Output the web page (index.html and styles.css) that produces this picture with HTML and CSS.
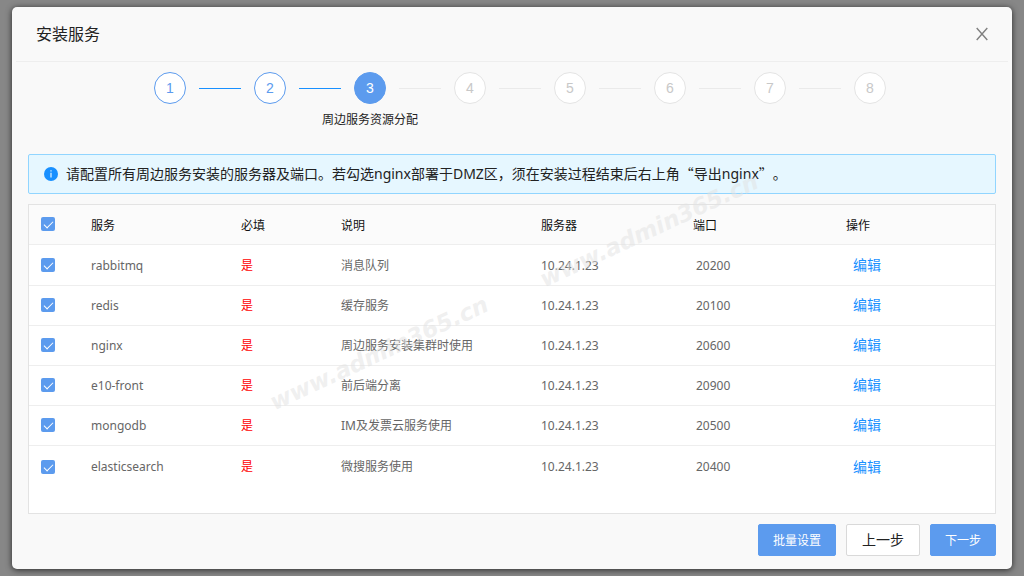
FILE: index.html
```html
<!DOCTYPE html>
<html lang="zh-CN">
<head>
<meta charset="utf-8">
<meta name="viewport" content="width=device-width, initial-scale=1">
<title>安装服务</title>
<link rel="stylesheet" href="styles.css">
</head>
<body>
<main class="modal" role="dialog" aria-labelledby="modal-title">
  <header class="modal-header">
    <h1 class="modal-title" id="modal-title">安装服务</h1>
    <button class="modal-close" type="button" aria-label="关闭">
      <svg width="12" height="14" viewBox="0 0 12 14" fill="none" stroke="#808080" stroke-width="1.4"><path d="M.7 1 11.3 13M11.3 1 .7 13"/></svg>
    </button>
  </header>

  <ol class="steps">
    <li class="step done"><span class="step-dot">1</span></li>
    <li class="step done"><span class="step-dot">2</span></li>
    <li class="step current" aria-current="step"><span class="step-dot">3</span><span class="step-label">周边服务资源分配</span></li>
    <li class="step"><span class="step-dot">4</span></li>
    <li class="step"><span class="step-dot">5</span></li>
    <li class="step"><span class="step-dot">6</span></li>
    <li class="step"><span class="step-dot">7</span></li>
    <li class="step"><span class="step-dot">8</span></li>
  </ol>

  <div class="alert" role="note">
    <svg class="alert-icon" width="14" height="14" viewBox="0 0 14 14"><circle cx="7" cy="7" r="7" fill="#1890ff"/><path d="M6.4 3.3h1.2v1.3H6.4zM6.4 5.8h1.2v4.6H6.4z" fill="#e6f7ff"/></svg>
    <p class="alert-text">请配置所有周边服务安装的服务器及端口。若勾选nginx部署于DMZ区<span class="cjk">，</span>须在安装过程结束后右上角<span class="cjk">“</span>导出nginx<span class="cjk">”</span>。</p>
  </div>

  <section class="panel">
    <table class="services">
      <colgroup>
        <col class="col-check"><col class="col-name"><col class="col-required"><col class="col-desc"><col class="col-server"><col class="col-port"><col>
      </colgroup>
      <thead>
        <tr>
          <th class="cell-check"><input class="check" type="checkbox" aria-label="全选" checked></th>
          <th>服务</th><th>必填</th><th>说明</th><th>服务器</th><th>端口</th><th>操作</th>
        </tr>
      </thead>
      <tbody>
        <tr>
          <td class="cell-check"><input class="check" type="checkbox" aria-label="rabbitmq" checked></td>
          <td>rabbitmq</td><td class="required">是</td><td>消息队列</td><td>10.24.1.23</td><td class="port">20200</td><td class="action"><a class="edit" href="#">编辑</a></td>
        </tr>
        <tr>
          <td class="cell-check"><input class="check" type="checkbox" aria-label="redis" checked></td>
          <td>redis</td><td class="required">是</td><td>缓存服务</td><td>10.24.1.23</td><td class="port">20100</td><td class="action"><a class="edit" href="#">编辑</a></td>
        </tr>
        <tr>
          <td class="cell-check"><input class="check" type="checkbox" aria-label="nginx" checked></td>
          <td>nginx</td><td class="required">是</td><td>周边服务安装集群时使用</td><td>10.24.1.23</td><td class="port">20600</td><td class="action"><a class="edit" href="#">编辑</a></td>
        </tr>
        <tr>
          <td class="cell-check"><input class="check" type="checkbox" aria-label="e10-front" checked></td>
          <td>e10-front</td><td class="required">是</td><td>前后端分离</td><td>10.24.1.23</td><td class="port">20900</td><td class="action"><a class="edit" href="#">编辑</a></td>
        </tr>
        <tr>
          <td class="cell-check"><input class="check" type="checkbox" aria-label="mongodb" checked></td>
          <td>mongodb</td><td class="required">是</td><td>IM及发票云服务使用</td><td>10.24.1.23</td><td class="port">20500</td><td class="action"><a class="edit" href="#">编辑</a></td>
        </tr>
        <tr>
          <td class="cell-check"><input class="check" type="checkbox" aria-label="elasticsearch" checked></td>
          <td>elasticsearch</td><td class="required">是</td><td>微搜服务使用</td><td>10.24.1.23</td><td class="port">20400</td><td class="action"><a class="edit" href="#">编辑</a></td>
        </tr>
      </tbody>
    </table>
  </section>

  <footer class="modal-footer">
    <button class="btn btn-primary" type="button">批量设置</button>
    <button class="btn btn-default" type="button">上一步</button>
    <button class="btn btn-primary" type="button">下一步</button>
  </footer>

  <span class="watermark watermark-left" aria-hidden="true">www.admin365.cn</span>
  <span class="watermark watermark-right" aria-hidden="true">www.admin365.cn</span>
</main>
</body>
</html>
```

FILE: styles.css
```css
* {
  box-sizing: border-box;
}

body {
  margin: 0;
  padding: 7px 12px;
  background: #878787;
  color: #222;
  font: 12px/20px "Noto Sans", "Noto Sans CJK SC", sans-serif;
}

.modal {
  position: relative;
  display: flex;
  flex-direction: column;
  min-height: calc(100vh - 14px);
  background: #f9f9f9;
  border-radius: 5px;
  box-shadow: 0 1px 6px rgba(0, 0, 0, 0.7);
}

.modal-header {
  display: flex;
  align-items: center;
  justify-content: space-between;
  height: 55px;
  margin: 0 4px;
  padding: 0 20px;
  border-bottom: 1px solid #eee;
}

.modal-title {
  margin: 0;
  font-size: 16px;
  font-weight: 400;
  line-height: 24px;
}

.modal-close {
  display: flex;
  padding: 0;
  border: 0;
  background: none;
}

/* Steps */
.steps {
  display: flex;
  justify-content: center;
  margin: 0;
  padding: 10px 0 0 16px;
  list-style: none;
}

.step {
  position: relative;
  display: flex;
  flex-direction: column;
  align-items: center;
  width: 100px;
  height: 82px;
}

.step-dot {
  display: flex;
  align-items: center;
  justify-content: center;
  width: 32px;
  height: 32px;
  border: 1px solid #e4e4e4;
  border-radius: 50%;
  background: #fff;
  color: #c8c8c8;
  font: 14px/20px "Liberation Sans", sans-serif;
}

.step-label {
  margin-top: 6px;
  white-space: nowrap;
}

.step:not(:last-child)::after {
  content: "";
  position: absolute;
  top: 16px;
  left: 79px;
  width: 42px;
  height: 1px;
  background: #eaeaea;
}

.step.done::after {
  background: #1890ff;
}

.done .step-dot {
  border-color: #5c9bee;
  color: #5c9bee;
}

.current .step-dot {
  border-color: #5c9bee;
  background: #5c9bee;
  color: #fff;
}

/* Notice */
.alert {
  display: flex;
  align-items: center;
  gap: 8px;
  min-height: 40px;
  margin: 0 16px 10px;
  padding: 0 15px;
  border: 1px solid #91d5ff;
  border-radius: 2px;
  background: #e6f7ff;
}

.alert-icon {
  flex: none;
}

.alert-text {
  margin: 0;
  padding-bottom: 2px;
  font-size: 14px;
  text-spacing-trim: space-all;
}

.cjk {
  font-family: "Noto Sans CJK SC", sans-serif;
}

/* Service table */
.panel {
  flex: 1;
  margin: 0 16px;
  border: 1px solid #e3e3e3;
  background: #fff;
}

.services {
  width: 100%;
  table-layout: fixed;
  border-collapse: separate;
  border-spacing: 0;
}

.col-check {
  width: 62px;
}

.col-name {
  width: 150px;
}

.col-required {
  width: 100px;
}

.col-desc {
  width: 200px;
}

.col-server {
  width: 152px;
}

.col-port {
  width: 153px;
}

.services th,
.services td {
  height: 40px;
  padding: 0;
  border-bottom: 1px solid #eee;
  text-align: left;
  vertical-align: middle;
}

.services th {
  padding-top: 2px;
  background: #fbfbfb;
  color: #111;
  font-weight: 400;
}

.services td {
  color: #666;
}

.services tbody tr:first-child td {
  height: 41px;
}

.services tbody tr:first-child td,
.services tbody tr:last-child td {
  padding-top: 1px;
}

.services tbody tr:last-child td {
  height: 41px;
  border-bottom: 0;
}

.services .cell-check {
  padding: 0 0 1px 12px;
}

.services .required {
  color: #f00;
}

.services .port {
  padding-left: 3px;
}

.services .action {
  padding-left: 7px;
}

.edit {
  color: #1890ff;
  font-size: 14px;
  text-decoration: none;
}

.check {
  appearance: none;
  display: block;
  position: relative;
  width: 14px;
  height: 14px;
  margin: 0;
  border-radius: 2px;
  background: #5c9bee;
}

.check::after {
  content: "";
  position: absolute;
  top: 2px;
  left: 5px;
  width: 4px;
  height: 8px;
  border: solid #fff;
  border-width: 0 1px 1px 0;
  transform: rotate(45deg);
}

/* Footer */
.modal-footer {
  display: flex;
  justify-content: flex-end;
  gap: 10px;
  padding: 10px 16px 13px;
}

.btn {
  height: 32px;
  padding: 1px 14px 0;
  border: 1px solid #5c9bee;
  border-radius: 2px;
  font: inherit;
}

.btn-primary {
  background: #5c9bee;
  color: #fff;
}

.btn-default {
  padding: 0 15px;
  border-color: #d9d9d9;
  background: #fff;
  color: #222;
  font-size: 14px;
}

/* Watermark laid over the dialog */
.watermark {
  position: absolute;
  color: rgba(225, 225, 225, 0.5);
  font: italic bold 23px/28px "DejaVu Sans", sans-serif;
  white-space: nowrap;
  pointer-events: none;
  transform: rotate(-25deg);
}

.watermark-left {
  top: 332px;
  left: 248px;
}

.watermark-right {
  top: 209px;
  left: 518px;
}
```
